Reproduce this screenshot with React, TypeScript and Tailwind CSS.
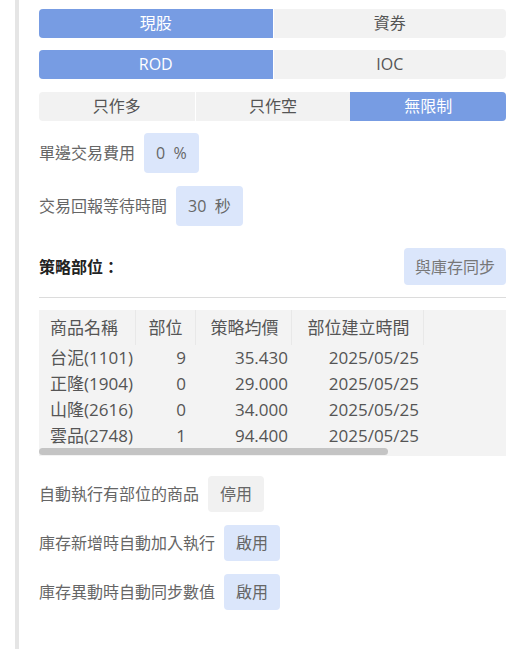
import React from "react";

const font = { fontFamily: '"Open Sans", "Noto Sans CJK TC", sans-serif' };

/* ---------------- Segmented toggles ---------------- */
const Segmented: React.FC<{ options: string[]; active: number }> = ({ options, active }) => (
  <div
    className={`grid h-[29px] overflow-hidden rounded-[4px] bg-[#f2f2f2] text-[16px] leading-[29px] ${
      options.length === 3 ? "grid-cols-3" : "grid-cols-2"
    }`}
  >
    {options.map((o, i) => (
      <div
        key={o}
        className={`text-center ${i > 0 && i !== active ? "border-l border-white" : ""} ${
          i === active ? "bg-[#779ce3] text-white" : "text-[#555]"
        }`}
      >
        {o}
      </div>
    ))}
  </div>
);

const Chip: React.FC<{ text: string; on?: boolean; tall?: boolean }> = ({ text, on = true, tall }) => (
  <span
    className={`ml-[9px] inline-flex items-center rounded-[4px] px-3 text-[16px] text-[#666] whitespace-pre ${
      tall ? "h-10" : "h-9"
    } ${on ? "bg-[#dbe6fb]" : "bg-[#f1f1f1]"}`}
  >
    {text}
  </span>
);

const rows = [
  { name: "台泥(1101)", qty: 9, price: "35.430", date: "2025/05/25" },
  { name: "正隆(1904)", qty: 0, price: "29.000", date: "2025/05/25" },
  { name: "山隆(2616)", qty: 0, price: "34.000", date: "2025/05/25" },
  { name: "雲品(2748)", qty: 1, price: "94.400", date: "2025/05/25" },
];

export default function App() {
  return (
    <div className="flex min-h-[649px] bg-white pl-[15px]" style={font}>
      <div className="w-1 shrink-0 bg-[#e5e5e5]" />
      <div className="min-w-0 flex-1 px-5 pt-[9px]">
        <Segmented options={["現股", "資券"]} active={0} />
        <div className="mt-3">
          <Segmented options={["ROD", "IOC"]} active={0} />
        </div>
        <div className="mt-[13px]">
          <Segmented options={["只作多", "只作空", "無限制"]} active={2} />
        </div>

        <div className="mt-3 flex items-center text-[16px] text-[#666]">
          <span>單邊交易費用</span>
          <Chip text="0  %" tall />
        </div>
        <div className="mt-[13px] flex items-center text-[16px] text-[#666]">
          <span>交易回報等待時間</span>
          <Chip text="30  秒" tall />
        </div>

        <div className="mt-[22px] flex items-center justify-between">
          <span className="text-[16px] font-bold text-[#222]">策略部位：</span>
          <button className="h-[37px] w-[102px] rounded-[4px] bg-[#dbe6fb] text-[16px] text-[#777]">
            與庫存同步
          </button>
        </div>
        <div className="mt-3 border-t border-[#dcdcdc]" />

        {/* table with horizontal scroll thumb */}
        <div className="mt-3 flex h-[146px] flex-col overflow-hidden bg-[#f3f3f3]">
          <div className="h-[138px] overflow-hidden">
            <table className="w-[625px] table-fixed border-collapse text-[17px] text-[#555]">
              <colgroup>
                <col className="w-[96px]" />
                <col className="w-[60px]" />
                <col className="w-[96px]" />
                <col className="w-[132px]" />
                <col />
              </colgroup>
              <thead>
                <tr className="h-[35px]">
                  <th className="border-r border-[#e8e8e8] pl-[11px] text-left font-normal">商品名稱</th>
                  <th className="border-r border-[#e8e8e8] pr-3 text-right font-normal">部位</th>
                  <th className="border-r border-[#e8e8e8] pr-[12px] text-right font-normal">策略均價</th>
                  <th className="border-r border-[#e8e8e8] pr-[13px] text-right font-normal">部位建立時間</th>
                  <th />
                </tr>
              </thead>
              <tbody>
                {rows.map((r) => (
                  <tr key={r.name} className="h-[26px] leading-[26px]">
                    <td className="pl-[11px] whitespace-nowrap">{r.name}</td>
                    <td className="pr-[9px] text-right">{r.qty}</td>
                    <td className="pr-[3px] text-right">{r.price}</td>
                    <td className="pr-[4px] text-right">{r.date}</td>
                    <td />
                  </tr>
                ))}
              </tbody>
            </table>
          </div>
          <div className="h-[7px] w-[349px] rounded-full bg-[#c4c4c4]" />
        </div>

        <div className="mt-5 flex items-center text-[16px] text-[#666]">
          <span>自動執行有部位的商品</span>
          <Chip text="停用" on={false} />
        </div>
        <div className="mt-[13px] flex items-center text-[16px] text-[#666]">
          <span>庫存新增時自動加入執行</span>
          <Chip text="啟用" />
        </div>
        <div className="mt-[13px] flex items-center text-[16px] text-[#666]">
          <span>庫存異動時自動同步數值</span>
          <Chip text="啟用" />
        </div>
      </div>
    </div>
  );
}
